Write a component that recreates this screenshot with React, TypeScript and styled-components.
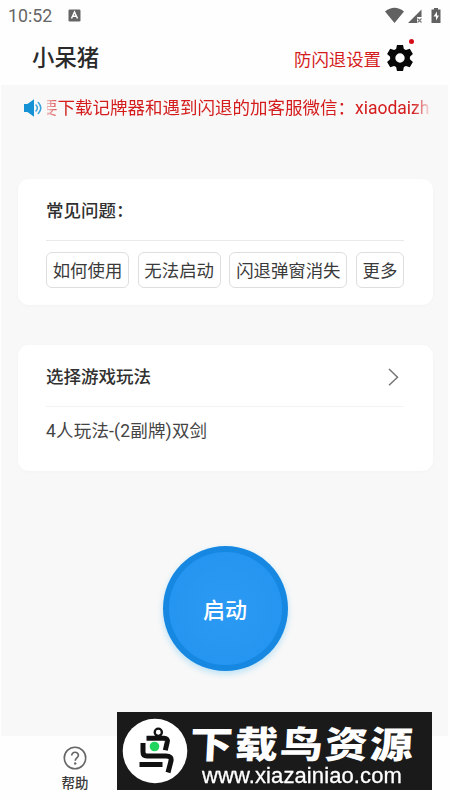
import React from "react";
import styled, { createGlobalStyle } from "styled-components";

const Global = createGlobalStyle`
  * { box-sizing: border-box; }
  body { margin: 0; background: #fefefe; font-family: Roboto, "Noto Sans CJK SC", sans-serif; color: #333; }
`;
const Screen = styled.div`
  width: 450px; height: 800px; overflow: hidden; position: relative;
  display: flex; flex-direction: column;
`;
const StatusBar = styled.div`
  height: 30px; display: flex; align-items: center; padding: 1px 8px 0; color: #666;
  font-size: 17.8px;
  svg { display: block; }
`;
const Clock = styled.span`width: 60px;`;
const StatusIcons = styled.div`margin-left: auto; display: flex; align-items: center;`;
const Header = styled.header`
  height: 55px; padding: 0 36px 0 32px; display: flex; align-items: center; justify-content: space-between;
`;
const Title = styled.h1`
  margin: 0; font-size: 22.4px; font-weight: 500; line-height: 30px; color: #2a2a2a;
`;
const Settings = styled.div`
  display: flex; align-items: center; gap: 5px; color: #d41c1c; font-size: 17.4px; line-height: 28px;
  padding-top: 4px; position: relative;
  svg { margin-top: -4px; }
`;
const Dot = styled.i`
  position: absolute; right: 0; top: -3px; width: 5px; height: 5px; border-radius: 50%; background: #d60c18;
`;
const Content = styled.main`
  height: 651px; margin: 0 2px 0 1px; padding: 0 15px 0 16px; background: #f8f8f8;
  display: flex; flex-direction: column; align-items: center;
`;
const Notice = styled.div`
  width: 100%; height: 46px; padding: 0 4px 0 6px; display: flex; align-items: center;
  svg { flex: none; }
`;
const Marquee = styled.div`
  width: 383px; margin-left: 4px; overflow: hidden; display: flex; color: #d41c1c; font-size: 17.5px;
  line-height: 28px; white-space: nowrap;
  mask-image: linear-gradient(90deg, rgba(0,0,0,.25), #000 14px, #000 366px, rgba(0,0,0,.15));
  span { margin-left: -7px; }
`;
const Card = styled.section<{ $top: number }>`
  width: 415px; height: 126px; margin-top: ${(p) => p.$top}px; flex: none;
  padding: 0 28.5px; border-radius: 11px; background: #fff; box-shadow: 0 1px 4px rgba(0,0,0,.025);
`;
const CardHead = styled.div<{ $line: string }>`
  height: 62px; padding-top: 3px; border-bottom: 1px solid ${(p) => p.$line};
  display: flex; align-items: center; justify-content: space-between;
`;
const CardTitle = styled.h2`margin: 0; font-size: 17.5px; line-height: 26px; font-weight: 500; color: #303030;`;
const Chips = styled.div`display: flex; justify-content: space-between; padding-top: 11px;`;
const Chip = styled.button<{ $w: number }>`
  width: ${(p) => p.$w}px; height: 36px; padding: 1px 0 0; border: 1px solid #dedede; border-radius: 6px;
  background: #fff; color: #3a3a3a; font: inherit; font-size: 17.4px; line-height: 24px; white-space: nowrap;
`;
const Choice = styled.div`
  padding-top: 11px; font-size: 17.5px; line-height: 26px; letter-spacing: .18px; color: #444;
`;
const Start = styled.button`
  width: 125px; height: 125px; margin-top: 75px; padding: 6px; border: 0; border-radius: 50%;
  background: #1688e2; box-shadow: 0 3px 6px rgba(30,170,240,.28);
  color: #fff; font: inherit; font-size: 22px; font-weight: 500; flex: none;
`;
const StartFace = styled.span`
  display: flex; align-items: center; justify-content: center; height: 100%; padding-bottom: 1px;
  border-radius: 50%; background: radial-gradient(circle, #2c9af3, #2193ef);
`;
const Nav = styled.nav`height: 64px; padding-left: 50px; display: flex;`;
const NavItem = styled.div`
  width: 50px; padding-top: 10px; display: flex; flex-direction: column; align-items: center;
  font-size: 13.4px; line-height: 20px; font-weight: 500; color: #3a3a3a;
  svg { margin-bottom: 4px; }
`;
const Watermark = styled.aside`
  position: absolute; left: 117px; top: 712px; width: 315px; height: 78px; background: #1a1a1a;
  display: flex; align-items: center; padding-left: 5px; color: #fff;
`;
const Brand = styled.div`
  width: 228px; display: flex; flex-direction: column; align-items: center; gap: 3px; padding-top: 9px;
`;
const BrandName = styled.strong`
  height: 38px; font: 900 43px/38px "Noto Sans CJK SC", sans-serif; letter-spacing: 2px;
  white-space: nowrap; transform: skewX(-3deg) scaleY(.86);
`;
const BrandUrl = styled.span`
  height: 24px; font: 22px/24px "Liberation Sans", sans-serif; letter-spacing: .1px;
  -webkit-text-stroke: .3px #fff; transform: scaleY(.97);
`;

const KeyboardIcon = () => (
  <svg width="13" height="13" viewBox="0 0 13 13">
    <rect x=".5" y=".5" width="12" height="12" rx="1.3" fill="#656565" />
    <path d="M3.5 9.5 6.500 3l3 6.500M4.600 7.300h3.800" fill="none" stroke="#fff" strokeWidth="1.500" />
  </svg>
);
const SignalIcons = () => (
  <svg width="58" height="18" viewBox="0 0 58 18" fill="#616161">
    <path d="M1 4.500Q10.500-3 20 4.500L10.500 16Z" />
    <path d="M24 16 37.500 2.500V10H33v6Z" />
    <path d="m33.500 11.500 4 4m0-4-4 4" stroke="#777" strokeWidth="1.100" />
    <path d="M50 1h4v1.500h2.500V16h-9V2.500H50Z" />
    <path d="m53 4.500-3.500 5H52v4l3-5h-2Z" fill="#fff" />
  </svg>
);
const GearIcon = () => (
  <svg width="28" height="28" viewBox="0 0 28 28">
    <path fill="#080808" fillRule="evenodd" d="M11 1h6l.9 3.900 2 1.100L23.800 4.800l3.100 5.200-3 2.800v2.400l3 2.800-3.100 5.200-3.900-1.200-2 1.100L17 27h-6l-.9-3.900-2-1.100-3.900 1.200L1.100 18l3-2.800v-2.400l-3-2.800 3.100-5.200L8.100 6l2-1.100ZM14 9.300a4.700 4.700 0 1 0 0 9.400 4.700 4.700 0 0 0 0-9.400Z" />
  </svg>
);
const SpeakerIcon = () => (
  <svg width="20" height="20" viewBox="0 0 20 20">
    <path d="M1 6h3.500L11 1.200v17.600L4.500 14H1Z" fill="#1591d5" />
    <path d="M13 7q2.800 3 0 6M15.300 4.500q5 5.500 0 11" fill="none" stroke="#38a4dc" strokeWidth="1.500" strokeLinecap="round" />
  </svg>
);
const ChevronIcon = () => (
  <svg width="20" height="20" viewBox="0 0 20 20">
    <path d="m5 2 8.500 8.200L5 18.200" fill="none" stroke="#777" strokeWidth="1.500" />
  </svg>
);
const HelpIcon = () => (
  <svg width="24" height="24" viewBox="0 0 24 24" fill="none" stroke="#666" strokeWidth="1.600">
    <circle cx="12" cy="12" r="10.700" />
    <path d="M8.700 9.600c0-4.600 6.800-4.200 6.700-.3 0 2.500-3.200 2.600-3.200 5.400" strokeWidth="1.700" />
    <circle cx="12.200" cy="17.500" r="1.200" fill="#666" stroke="none" />
  </svg>
);
const BirdLogo = () => (
  <svg width="66" height="66" viewBox="0 0 66 66">
    <circle cx="33" cy="33" r="32.300" fill="#fff" />
    <g fill="none" stroke="#111" strokeWidth="5">
      <circle cx="36.300" cy="14.300" r="3.600" strokeWidth="2.300" />
      <path d="M24.500 20.300h17.500q4 0 3.300 3.500l-2 8.500" />
      <path d="M21 25v9q0 4 4 4h19q6 0 5 5l-3 11.500M17.500 46.500h23" />
    </g>
    <circle cx="32.500" cy="28.500" r="4.800" fill="#20d45d" />
  </svg>
);

const faqs = [
  { text: "如何使用", width: 83 },
  { text: "无法启动", width: 83 },
  { text: "闪退弹窗消失", width: 118 },
  { text: "更多", width: 48 },
];

export default function App() {
  return (
    <Screen>
      <Global />
      <StatusBar>
        <Clock>10:52</Clock>
        <KeyboardIcon />
        <StatusIcons><SignalIcons /></StatusIcons>
      </StatusBar>
      <Header>
        <Title>小呆猪</Title>
        <Settings>防闪退设置<GearIcon /><Dot /></Settings>
      </Header>
      <Content>
        <Notice>
          <SpeakerIcon />
          <Marquee><span>要下载记牌器和遇到闪退的加客服微信：xiaodaizh</span></Marquee>
        </Notice>
        <Card $top={48}>
          <CardHead $line="#e9e9e9"><CardTitle>常见问题：</CardTitle></CardHead>
          <Chips>{faqs.map((f) => <Chip key={f.text} $w={f.width}>{f.text}</Chip>)}</Chips>
        </Card>
        <Card $top={40}>
          <CardHead $line="#f3f3f3"><CardTitle>选择游戏玩法</CardTitle><ChevronIcon /></CardHead>
          <Choice>4人玩法-(2副牌)双剑</Choice>
        </Card>
        <Start><StartFace>启动</StartFace></Start>
      </Content>
      <Nav><NavItem><HelpIcon />帮助</NavItem></Nav>
      <Watermark>
        <BirdLogo />
        <Brand>
          <BrandName>下载鸟资源</BrandName>
          <BrandUrl>www.xiazainiao.com</BrandUrl>
        </Brand>
      </Watermark>
    </Screen>
  );
}
